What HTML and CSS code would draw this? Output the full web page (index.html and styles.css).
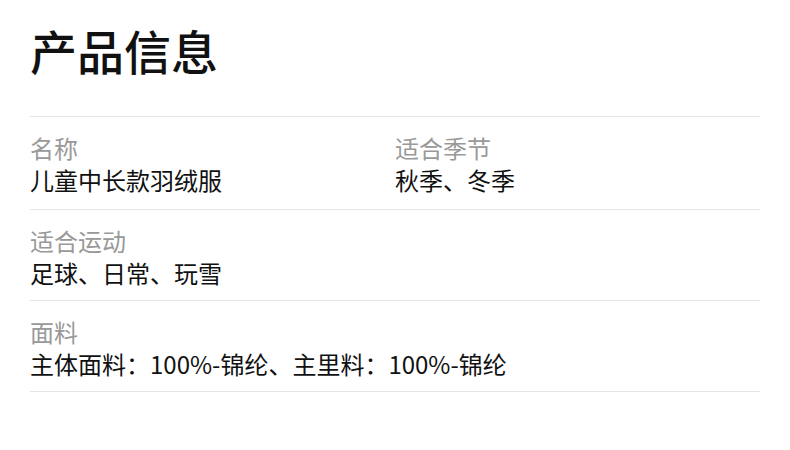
FILE: index.html
```html
<!DOCTYPE html>
<html lang="zh-CN">
<head>
<meta charset="utf-8">
<link rel="stylesheet" href="styles.css">
</head>
<body>
<div class="page">
  <h1 class="title">产品信息</h1>
  <div class="table">
    <div class="row two">
      <div class="cell">
        <div class="label">名称</div>
        <div class="value">儿童中长款羽绒服</div>
      </div>
      <div class="cell">
        <div class="label">适合季节</div>
        <div class="value">秋季、冬季</div>
      </div>
    </div>
    <div class="row">
      <div class="cell">
        <div class="label">适合运动</div>
        <div class="value">足球、日常、玩雪</div>
      </div>
    </div>
    <div class="row">
      <div class="cell">
        <div class="label">面料</div>
        <div class="value">主体面料：100%-锦纶、主里料：100%-锦纶</div>
      </div>
    </div>
  </div>
</div>
</body>
</html>
```
FILE: styles.css
```css
html, body {
  margin: 0;
  padding: 0;
  background: #fff;
}
body {
  font-family: "Noto Sans CJK SC", "Noto Sans", sans-serif;
  color: #111;
}
.page {
  padding: 18px 30px 0;
}
.title {
  margin: 0 0 35px;
  font-size: 47px;
  line-height: 63px;
  font-weight: 500;
  color: #111;
}
.table {
  border-top: 1px solid #e6e6e6;
}
.row {
  display: grid;
  grid-template-columns: 1fr;
  padding: 15px 0 11px;
  border-bottom: 1px solid #e6e6e6;
}
.row.two {
  grid-template-columns: 1fr 1fr;
  padding-bottom: 13px;
}
.label {
  font-size: 24px;
  line-height: 32px;
  color: #999;
}
.value {
  font-size: 24px;
  line-height: 32px;
  color: #111;
}
```
